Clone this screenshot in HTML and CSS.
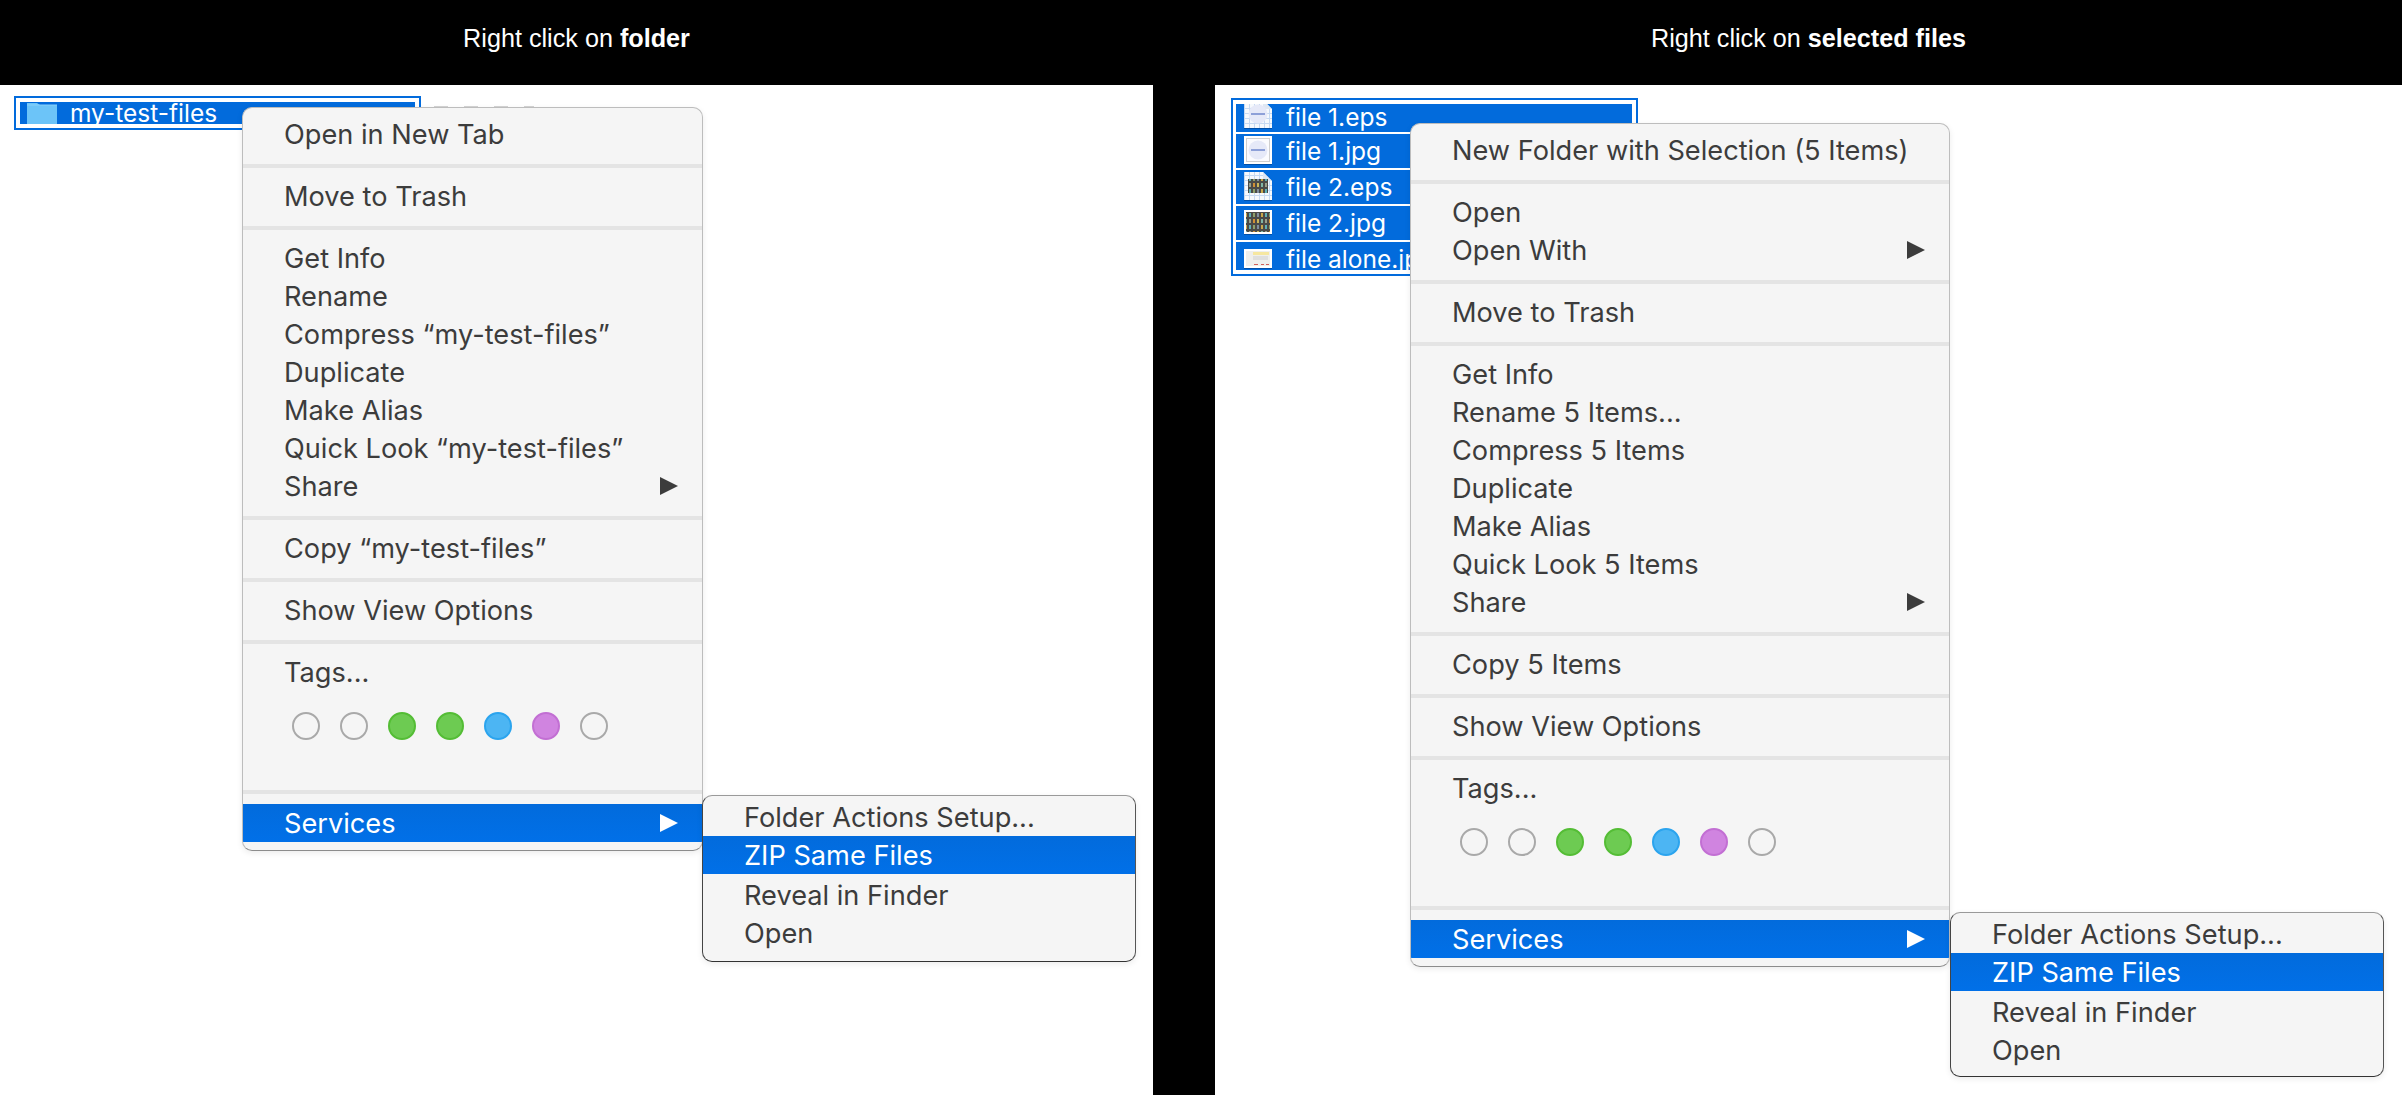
FILE: index.html
```html
<!DOCTYPE html>
<html lang="en">
<head>
  <meta charset="UTF-8" />
  <title>Right click on folder or selected files</title>
  <link rel="stylesheet" href="styles.css">
</head>
<body>

  <svg class="defs" width="0" height="0">
    <defs>
      <pattern id="gridDots" width="5" height="5" patternUnits="userSpaceOnUse">
        <rect width="5" height="5" fill="#f6f9fd"/>
        <path d="M0 .5H5M.5 0V5" stroke="#c6d9f2" stroke-width="1"/>
      </pattern>
      <pattern id="tinyCells" width="16" height="12" patternUnits="userSpaceOnUse">
        <rect width="16" height="12" fill="#4a4a48"/>
        <rect x="1" y="1" width="2" height="4" fill="#7fb5a5"/>
        <rect x="5" y="1" width="2" height="4" fill="#9a9f8a"/>
        <rect x="9" y="1" width="2" height="4" fill="#d08f35"/>
        <rect x="13" y="1" width="2" height="4" fill="#c9b65a"/>
        <rect x="1" y="7" width="2" height="4" fill="#c9a84a"/>
        <rect x="5" y="7" width="2" height="4" fill="#5fb0b8"/>
        <rect x="9" y="7" width="2" height="4" fill="#8fa06a"/>
        <rect x="13" y="7" width="2" height="4" fill="#7f8f9f"/>
      </pattern>
      <symbol id="blueBlob" viewBox="0 0 20 20">
        <circle cx="10" cy="10" r="9.5" fill="#e6e9f8"/>
        <rect x="3" y="9" width="14" height="2" fill="#8ea0d8"/>
      </symbol>
    </defs>
  </svg>

  <section class="panel">
    <header class="panel-title">Right click on <strong>folder</strong></header>
    <div class="canvas">
      <div class="selection selection-folder">
        <div class="file-row">
          <svg class="folder-icon" viewBox="0 0 30 21">
            <path d="M0 0H10L13 2H30V21H0Z" fill="#6cc4f8"/>
            <path d="M0 2H30" stroke="#8ad2fa"/>
          </svg>
          <span class="file-name">my-test-files</span>
        </div>
      </div>
      <div class="ghost-text"></div>

      <div class="menu menu-folder">
        <div class="item">Open in New Tab</div>
        <div class="sep"></div>
        <div class="item">Move to Trash</div>
        <div class="sep"></div>
        <div class="item">Get Info</div>
        <div class="item">Rename</div>
        <div class="item">Compress “my-test-files”</div>
        <div class="item">Duplicate</div>
        <div class="item">Make Alias</div>
        <div class="item">Quick Look “my-test-files”</div>
        <div class="item has-sub">Share <i class="arrow"></i></div>
        <div class="sep"></div>
        <div class="item">Copy “my-test-files”</div>
        <div class="sep"></div>
        <div class="item">Show View Options</div>
        <div class="sep"></div>
        <div class="item">Tags...</div>
        <div class="tags">
          <b class="tag"></b><b class="tag"></b><b class="tag green"></b><b class="tag green"></b><b class="tag blue"></b><b class="tag purple"></b><b class="tag"></b>
        </div>
        <div class="sep sep-services"></div>
        <div class="item has-sub active">Services <i class="arrow"></i></div>
      </div>

      <div class="menu submenu submenu-folder">
        <div class="item">Folder Actions Setup...</div>
        <div class="item active">ZIP Same Files</div>
        <div class="item after-active">Reveal in Finder</div>
        <div class="item">Open</div>
      </div>
    </div>
  </section>

  <section class="panel panel-right">
    <header class="panel-title">Right click on <strong>selected files</strong></header>
    <div class="canvas">
      <div class="selection selection-files">
        <div class="file-row row-top">
          <svg class="thumb" viewBox="0 0 28 34">
            <path d="M0 2H19L28 11V30H0Z" fill="url(#gridDots)"/>
            <path d="M19 2V11H28Z" fill="#dfe7f2"/>
            <use href="#blueBlob" x="4" y="6" width="20" height="20"/>
            <path d="M0 30.5H28" stroke="#0150a8"/>
          </svg>
          <span class="file-name">file 1.eps</span>
        </div>
        <div class="file-row">
          <svg class="thumb" viewBox="0 0 28 34">
            <rect y="2" width="28" height="28" fill="#fff"/>
            <rect x="2.5" y="4.5" width="23" height="23" fill="#fbfbfe" stroke="#cfcfcf"/>
            <use href="#blueBlob" x="4" y="6" width="20" height="20"/>
            <path d="M0 30.5H28" stroke="#0150a8"/>
          </svg>
          <span class="file-name">file 1.jpg</span>
        </div>
        <div class="file-row">
          <svg class="thumb" viewBox="0 0 28 34">
            <path d="M0 2H19L28 11V30H0Z" fill="url(#gridDots)"/>
            <path d="M19 2V11H28Z" fill="#dfe7f2"/>
            <rect x="4" y="9" width="20" height="14" fill="url(#tinyCells)"/>
            <path d="M0 30.5H28" stroke="#0150a8"/>
          </svg>
          <span class="file-name">file 2.eps</span>
        </div>
        <div class="file-row">
          <svg class="thumb" viewBox="0 0 28 34">
            <rect y="4" width="28" height="24" fill="#fff"/>
            <rect x="2" y="6" width="24" height="20" fill="url(#tinyCells)"/>
            <path d="M0 28.5H28" stroke="#0150a8"/>
          </svg>
          <span class="file-name">file 2.jpg</span>
        </div>
        <div class="file-row row-bottom">
          <svg class="thumb" viewBox="0 0 28 34">
            <rect y="7" width="28" height="19" fill="#fff"/>
            <rect x="2" y="9" width="24" height="15" fill="#efefec"/>
            <rect x="9" y="10" width="16" height="3" fill="#f6e7a0"/>
            <path d="M9 15H24M9 17H24" stroke="#cfcfcf"/>
            <path d="M10 22.5H14M17 22.5H20M22 22.5H25" stroke="#d0605a"/>
            <path d="M0 26.5H28" stroke="#0150a8"/>
          </svg>
          <span class="file-name">file alone.jpg</span>
        </div>
      </div>

      <div class="menu menu-files">
        <div class="item">New Folder with Selection (5 Items)</div>
        <div class="sep"></div>
        <div class="item">Open</div>
        <div class="item has-sub">Open With <i class="arrow"></i></div>
        <div class="sep"></div>
        <div class="item">Move to Trash</div>
        <div class="sep"></div>
        <div class="item">Get Info</div>
        <div class="item">Rename 5 Items...</div>
        <div class="item">Compress 5 Items</div>
        <div class="item">Duplicate</div>
        <div class="item">Make Alias</div>
        <div class="item">Quick Look 5 Items</div>
        <div class="item has-sub">Share <i class="arrow"></i></div>
        <div class="sep"></div>
        <div class="item">Copy 5 Items</div>
        <div class="sep"></div>
        <div class="item">Show View Options</div>
        <div class="sep"></div>
        <div class="item">Tags...</div>
        <div class="tags">
          <b class="tag"></b><b class="tag"></b><b class="tag green"></b><b class="tag green"></b><b class="tag blue"></b><b class="tag purple"></b><b class="tag"></b>
        </div>
        <div class="sep sep-services"></div>
        <div class="item has-sub active">Services <i class="arrow"></i></div>
      </div>

      <div class="menu submenu submenu-files">
        <div class="item">Folder Actions Setup...</div>
        <div class="item active">ZIP Same Files</div>
        <div class="item after-active">Reveal in Finder</div>
        <div class="item">Open</div>
      </div>
    </div>
  </section>

</body>
</html>
```

FILE: styles.css
```css
* {
  box-sizing: border-box;
}

html, body {
  height: 100%;
}

body {
  margin: 0;
  background: #000;
  display: flex;
  overflow: hidden;
  font-family: "Inter", "Liberation Sans", sans-serif;
}

.defs {
  position: absolute;
}

.panel {
  width: 1153px;
  display: flex;
  flex-direction: column;
}

.panel-right {
  width: 1187px;
  margin-left: 62px;
}

.panel-title {
  height: 85px;
  padding-top: 24px;
  text-align: center;
  color: #fff;
  font-family: "Liberation Sans", sans-serif;
  font-size: 25.2px;
  line-height: 28px;
}

.canvas {
  position: relative;
  flex: 1;
  background: #fff;
}

/* selected items in the finder window */

.selection {
  position: absolute;
  border: 2px solid #026bdc;
  background: #fff;
  display: flex;
  flex-direction: column;
  gap: 2px;
}

.selection-folder {
  left: 14px;
  top: 11px;
  width: 407px;
  height: 34px;
  padding: 4px;
}

.selection-files {
  left: 16px;
  top: 13px;
  width: 407px;
  height: 178px;
  padding: 4px 4px 4px 3px;
}

.file-row {
  height: 34px;
  flex: none;
  background: #026bdc;
  display: flex;
  align-items: center;
  gap: 14px;
  padding-left: 8px;
  overflow: hidden;
}

.selection-folder .file-row {
  height: 22px;
  padding-left: 7px;
  gap: 13px;
}

.selection-folder .file-name {
  line-height: 22px;
}

.row-top {
  height: 28px;
  align-items: flex-end;
}

.row-top .file-name {
  line-height: 26px;
  align-self: flex-start;
}

.row-bottom {
  height: 28px;
  align-items: flex-start;
}

.row-bottom .file-name {
  line-height: 22px;
  margin-top: 6px;
}

.file-name {
  color: #fff;
  font-size: 24.5px;
  line-height: 34px;
  white-space: nowrap;
}

.thumb {
  width: 28px;
  height: 34px;
  flex: none;
}

.folder-icon {
  width: 30px;
  height: 21px;
  flex: none;
}

.ghost-text {
  position: absolute;
  left: 434px;
  top: 21px;
  width: 100px;
  height: 1px;
  background: repeating-linear-gradient(90deg, #d4d4d4 0 14px, #fff 14px 30px);
}

/* context menus */

.menu {
  position: absolute;
  background: #f5f5f5;
  border: 1px solid #bdbdbd;
  border-bottom-color: #8c8c8c;
  border-radius: 10px;
  box-shadow: 0 2px 6px rgba(0, 0, 0, 0.08);
  color: #3c3c3c;
  font-size: 27.2px;
  padding: 7px 0;
  overflow: hidden;
}

.menu-folder {
  left: 242px;
  top: 22px;
  width: 461px;
  height: 744px;
}

.menu-files {
  left: 195px;
  top: 38px;
  width: 540px;
  height: 844px;
}

.submenu {
  padding: 2px 0 0;
  width: 434px;
  height: 167px;
  border-color: #9a9a9a #555 #333 #444;
}

.submenu-folder {
  left: 702px;
  top: 710px;
}

.submenu-files {
  left: 735px;
  top: 827px;
  height: 165px;
}

.item {
  height: 38px;
  line-height: 36px;
  padding: 2px 0 0 41px;
  white-space: nowrap;
  display: flex;
  align-items: center;
  justify-content: space-between;
}

.item.active {
  background: linear-gradient(#026bdc, #0170e8);
  color: #fff;
}

.item.after-active {
  margin-top: 2px;
}

.arrow {
  width: 0;
  height: 0;
  margin: -2px 24px 0 0;
  border-left: 18px solid #3c3c3c;
  border-top: 9.5px solid transparent;
  border-bottom: 9.5px solid transparent;
}

.active .arrow {
  border-left-color: #fff;
}

.sep {
  height: 4px;
  margin: 11px 0 9px;
  background: #e4e4e4;
}

.sep-services {
  margin-top: 0;
  margin-bottom: 10px;
}

.tags {
  height: 99px;
  padding: 21px 0 0 49px;
  display: flex;
  gap: 20px;
  align-items: flex-start;
}

.tag {
  width: 28px;
  height: 28px;
  border-radius: 50%;
  border: 2px solid #a9a9a9;
}

.tag.green {
  background: #6dcb52;
  border-color: #54bd35;
}

.tag.blue {
  background: #4cb5f3;
  border-color: #2ba4ee;
}

.tag.purple {
  background: #d084e0;
  border-color: #c26fd3;
}
```
